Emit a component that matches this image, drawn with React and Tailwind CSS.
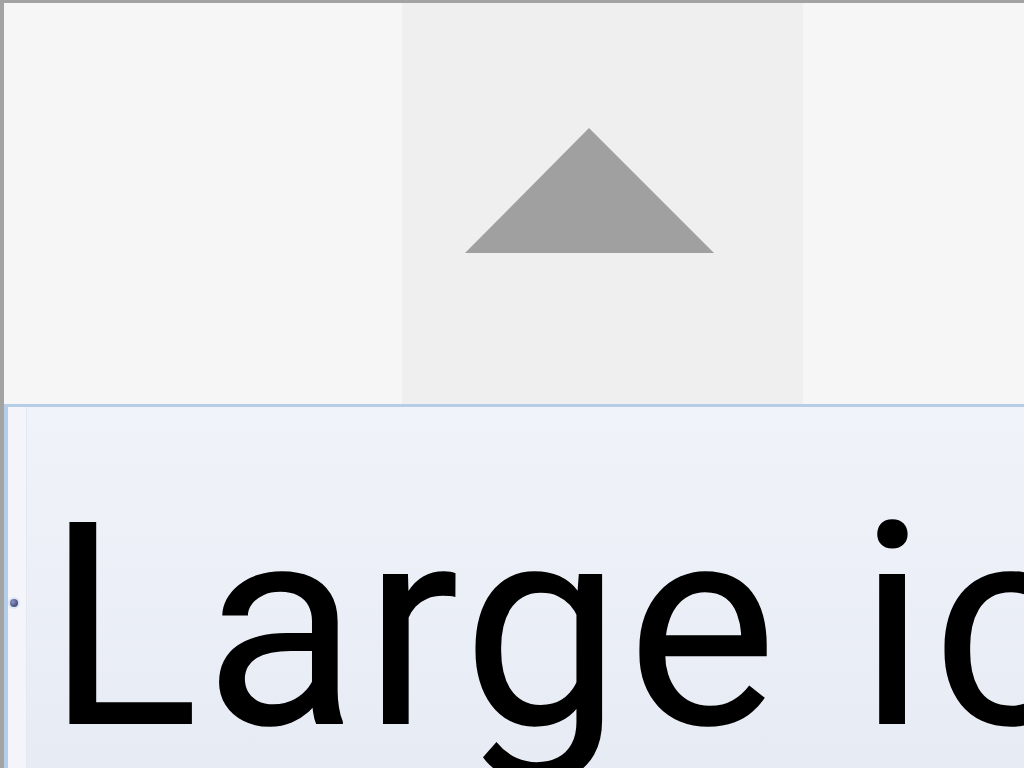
import React from 'react';

const Triangle = () => (
  <svg width="250" height="126" viewBox="0 0 250 126" className="block">
    <polygon points="0,125 124,0 249,125" fill="#a0a0a0" />
  </svg>
);

const App = () => {
  return (
    <div className="w-[1024px] h-[768px] overflow-hidden bg-[#a3a3a3] pt-[3px] pl-[4px] flex flex-col">
      <div className="h-[401px] flex bg-[#f6f6f6] shrink-0">
        <div className="w-[398px]" />
        <div className="w-[401px] bg-[#efefef] pl-[63px] pt-[125px]">
          <Triangle />
        </div>
        <div className="flex-1" />
      </div>

      <div className="flex-1 flex border-t-[3px] border-l-[4px] border-[#b5cde6] bg-gradient-to-b from-[#f0f3f9] to-[#e7ebf4] overflow-hidden">
        <div className="w-[19px] shrink-0 bg-[#f3f5fa] border-r border-[#e4e8f0] pl-[2px] pt-[192px]">
          <span className="block w-[8px] h-[8px] rounded-full bg-[radial-gradient(circle_at_35%_35%,#8a93c4,#2a3060)] ring-2 ring-[#dfe6f4]" />
        </div>
        <div className="flex-1 min-w-0 pl-[19px] pt-[78px]">
          <p
            className="whitespace-nowrap text-black leading-none text-[284px] tracking-[5px]"
            style={{ fontFamily: 'Roboto, "Noto Sans", sans-serif' }}
          >
            Large icons
          </p>
        </div>
      </div>
    </div>
  );
};

export default App;
